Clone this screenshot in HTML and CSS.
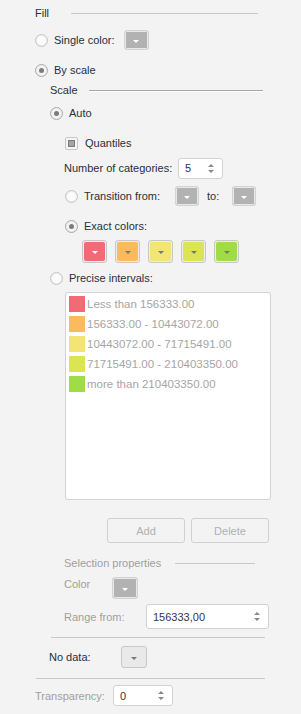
FILE: index.html
```html
<!DOCTYPE html>
<html>
<head>
<meta charset="utf-8">
<link rel="stylesheet" href="styles.css">
</head>
<body>
<div class="panel">
  <div class="group-head fill-head"><span class="gh-text">Fill</span><span class="gh-line light"></span></div>

  <div class="row r-single">
    <span class="radio"></span><span class="lbl">Single color:</span>
    <span class="cbtn grey single-btn"><span class="arrow white"></span></span>
  </div>

  <div class="row r-byscale">
    <span class="radio checked"></span><span class="lbl">By scale</span>
  </div>

  <div class="group-head scale-head"><span class="gh-text">Scale</span><span class="gh-line dark"></span></div>

  <div class="row r-auto">
    <span class="radio checked"></span><span class="lbl">Auto</span>
  </div>

  <div class="row r-quant">
    <span class="check"></span><span class="lbl">Quantiles</span>
  </div>

  <div class="row r-num">
    <span class="plain num-lbl">Number of categories:</span>
    <span class="spin num-spin"><span class="spin-val">5</span><span class="spin-arr"><span class="up"></span><span class="down"></span></span></span>
  </div>

  <div class="row r-trans">
    <span class="radio"></span><span class="lbl trans-lbl">Transition from:</span>
    <span class="cbtn grey from-btn"><span class="arrow white"></span></span>
    <span class="plain to-lbl">to:</span>
    <span class="cbtn grey to-btn"><span class="arrow white"></span></span>
  </div>

  <div class="row r-exact">
    <span class="radio checked"></span><span class="lbl">Exact colors:</span>
  </div>

  <div class="row r-swatches">
    <span class="sbtn"><span class="sfill c1"><span class="arrow white"></span></span></span>
    <span class="sbtn"><span class="sfill c2"><span class="arrow dim"></span></span></span>
    <span class="sbtn"><span class="sfill c3"><span class="arrow dim"></span></span></span>
    <span class="sbtn"><span class="sfill c4"><span class="arrow dim"></span></span></span>
    <span class="sbtn"><span class="sfill c5"><span class="arrow dim"></span></span></span>
  </div>

  <div class="row r-precise">
    <span class="radio"></span><span class="lbl">Precise intervals:</span>
  </div>

  <div class="listbox">
    <div class="item"><span class="sw c1"></span><span class="it">Less than 156333.00</span></div>
    <div class="item"><span class="sw c2"></span><span class="it">156333.00 - 10443072.00</span></div>
    <div class="item"><span class="sw c3"></span><span class="it">10443072.00 - 71715491.00</span></div>
    <div class="item"><span class="sw c4"></span><span class="it">71715491.00 - 210403350.00</span></div>
    <div class="item"><span class="sw c5"></span><span class="it">more than 210403350.00</span></div>
  </div>

  <div class="row r-buttons">
    <span class="btn">Add</span>
    <span class="btn">Delete</span>
  </div>

  <div class="group-head sel-head"><span class="gh-text dis">Selection properties</span><span class="gh-line light sel-line"></span></div>

  <div class="row r-color">
    <span class="plain dis color-lbl">Color</span>
    <span class="cbtn grey color-btn"><span class="arrow white"></span></span>
  </div>

  <div class="row r-range">
    <span class="plain dis range-lbl">Range from:</span>
    <span class="spin range-spin"><span class="spin-val">156333,00</span><span class="spin-arr"><span class="up"></span><span class="down"></span></span></span>
  </div>

  <div class="sep sep1"></div>

  <div class="row r-nodata">
    <span class="plain nodata-lbl">No data:</span>
    <span class="cbtn light nodata-btn"><span class="arrow dim"></span></span>
  </div>

  <div class="sep sep2"></div>

  <div class="row r-transp">
    <span class="plain dis transp-lbl">Transparency:</span>
    <span class="spin transp-spin"><span class="spin-val">0</span><span class="spin-arr"><span class="up"></span><span class="down"></span></span></span>
  </div>
</div>
</body>
</html>
```

FILE: styles.css
```css
html, body {
  margin: 0;
  padding: 0;
  background: #f3f3f3;
}
body {
  width: 301px;
  height: 714px;
  overflow: hidden;
  font-family: "Liberation Sans", Arial, sans-serif;
  font-size: 11px;
  color: #27303a;
}
.panel {
  display: flex;
  flex-direction: column;
  padding-top: 3px;
}
.row {
  display: flex;
  align-items: center;
}
.group-head {
  display: flex;
  align-items: center;
}
.gh-line {
  flex: none;
  height: 1px;
}
.gh-line.light { background: #c9c9c9; }
.gh-line.dark { background: #a6a6a6; box-shadow: 0 1px 0 #ffffff; }

.fill-head { height: 20px; padding-left: 35px; }
.fill-head .gh-line { margin-left: 22px; width: 187px; }

.radio {
  width: 11px;
  height: 11px;
  border: 1px solid #c6c6c6;
  border-radius: 50%;
  background: #fbfbfb;
  box-shadow: inset 0 0 0 1px #ededed;
  position: relative;
  flex: none;
}
.radio.checked {
  border-color: #a9a9a9;
  background: #f4f4f4;
}
.radio.checked::after {
  content: "";
  position: absolute;
  left: 3px;
  top: 3px;
  width: 5px;
  height: 5px;
  border-radius: 50%;
  background: #7c7c7c;
}
.lbl { margin-left: 6px; }
.check {
  width: 11px;
  height: 11px;
  border: 1px solid #c6c6c6;
  border-radius: 2px;
  background: #f6f6f6;
  position: relative;
  flex: none;
}
.check::after {
  content: "";
  position: absolute;
  left: 2px;
  top: 2px;
  width: 5px;
  height: 5px;
  border: 1px solid #7a7a7a;
  background: #a4a4a4;
}
.r-quant .lbl { margin-left: 7px; }

.cbtn {
  width: 24px;
  height: 20px;
  box-sizing: border-box;
  border: 1px solid #d3d3d3;
  border-radius: 3px;
  display: flex;
  align-items: center;
  justify-content: center;
  flex: none;
}
.cbtn.grey {
  background: #b2b2b2;
  box-shadow: inset 0 0 0 1px #e8e8e8;
}
.cbtn.light {
  background: #e9e9e9;
  border-color: #c8c8c8;
}
.arrow {
  width: 0;
  height: 0;
  border-left: 3px solid transparent;
  border-right: 3px solid transparent;
  border-top: 3px solid #ffffff;
  margin-top: 2px;
}
.arrow.white { border-top-color: #ffffff; }
.arrow.dim { border-top-color: #777777; }

.r-single { height: 24px; margin-top: 5px; padding-left: 35px; }
.single-btn { margin-left: 9px; width: 25px; }

.r-byscale { height: 20px; margin-top: 8px; padding-left: 35px; }
.r-byscale .lbl { margin-left: 6px; }

.scale-head { height: 16px; margin-top: 2px; padding-left: 50px; }
.scale-head .gh-line { margin-left: 11px; width: 174px; }

.r-auto { height: 20px; margin-top: 5px; padding-left: 50px; }

.r-quant { height: 20px; margin-top: 10px; padding-left: 65px; }

.r-num { height: 22px; margin-top: 4px; padding-left: 64px; }
.num-lbl { width: 114px; flex: none; }
.spin {
  box-sizing: border-box;
  background: #ffffff;
  border: 1px solid #d2d2d2;
  border-radius: 3px;
  display: flex;
  align-items: center;
  justify-content: space-between;
  flex: none;
}
.spin-val { padding-left: 6px; color: #2a3140; }
.spin-arr {
  display: flex;
  flex-direction: column;
  gap: 3px;
  padding-right: 8px;
}
.up, .down {
  width: 0;
  height: 0;
  border-left: 3px solid transparent;
  border-right: 3px solid transparent;
}
.up { border-bottom: 3px solid #8a8a8a; }
.down { border-top: 3px solid #8a8a8a; }
.num-spin { width: 45px; height: 21px; }

.r-trans { height: 22px; margin-top: 6px; padding-left: 65px; }
.trans-lbl { width: 91px; flex: none; }
.to-lbl { margin-left: 8px; width: 25px; flex: none; }

.r-exact { height: 20px; margin-top: 9px; padding-left: 65px; }

.r-swatches { height: 23px; margin-top: 4px; padding-left: 82px; gap: 8px; }
.sbtn {
  box-sizing: border-box;
  width: 25px;
  height: 23px;
  border: 1px solid #c8c8c8;
  border-radius: 3px;
  padding: 1px;
  background: #ececec;
  display: flex;
  flex: none;
}
.sfill {
  flex: 1;
  border-radius: 2px;
  display: flex;
  align-items: center;
  justify-content: center;
}
.c1 { background: #f06b75; }
.c2 { background: #fbbb5d; }
.c3 { background: #f3e574; }
.c4 { background: #dbe554; }
.c5 { background: #9fdc46; }

.r-precise { height: 20px; margin-top: 5px; padding-left: 50px; }

.listbox {
  margin-top: 4px;
  margin-left: 65px;
  width: 206px;
  height: 208px;
  box-sizing: border-box;
  background: #ffffff;
  border: 1px solid #d4d4d4;
  border-radius: 3px;
  padding: 3px 0 0 3px;
  display: flex;
  flex-direction: column;
  gap: 4px;
}
.item {
  display: flex;
  align-items: center;
  height: 16px;
}
.sw { width: 16px; height: 16px; flex: none; }
.it { margin-left: 2px; color: #a5a5a5; font-size: 11.5px; }

.r-buttons { height: 25px; margin-top: 18px; padding-left: 107px; gap: 6px; }
.btn {
  box-sizing: border-box;
  width: 78px;
  height: 25px;
  border: 1px solid #d0d0d0;
  border-radius: 3px;
  display: flex;
  align-items: center;
  justify-content: center;
  color: #b0b0b0;
}

.sel-head { height: 16px; margin-top: 12px; padding-left: 64px; }
.dis { color: #a0a0a0; }
.sel-line { margin-left: 14px; width: 80px; background: #b8b8b8; }

.r-color { height: 22px; margin-top: 6px; padding-left: 64px; align-items: flex-start; }
.color-lbl { margin-top: 1px; width: 48px; flex: none; }
.color-btn { width: 26px; height: 22px; }

.r-range { height: 25px; margin-top: 5px; padding-left: 64px; }
.range-lbl { width: 82px; flex: none; }
.range-spin { width: 123px; height: 25px; }
.range-spin .spin-val { padding-left: 6px; color: #3a3350; }

.sep { height: 1px; background: #c9c9c9; }
.sep1 { margin-top: 8px; margin-left: 51px; width: 214px; }

.r-nodata { height: 22px; margin-top: 8px; padding-left: 49px; }
.nodata-lbl { width: 72px; flex: none; }
.nodata-btn { width: 26px; height: 22px; }

.sep2 { margin-top: 10px; margin-left: 36px; width: 229px; }

.r-transp { height: 21px; margin-top: 6px; padding-left: 35px; }
.transp-lbl { width: 78px; flex: none; }
.transp-spin { width: 60px; height: 21px; }
```
